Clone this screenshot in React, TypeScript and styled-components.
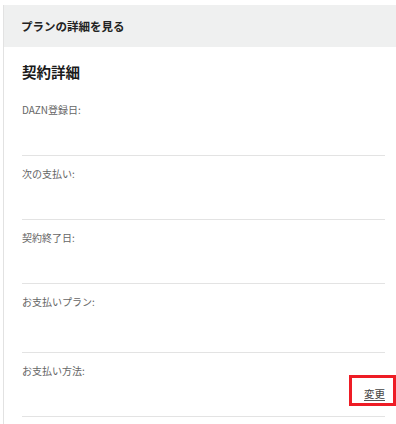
import React from "react";
import styled, {createGlobalStyle} from "styled-components";

const GlobalStyle = createGlobalStyle`
  html, body {
    margin: 0;
    padding: 0;
    background: #ffffff;
  }
  body {
    font-family: "Noto Sans CJK JP", "Noto Sans", "Liberation Sans", sans-serif;
    color: #333333;
  }
`;

const Panel = styled.div`
  margin: 5px 0 0 3px;
  border-left: 1px solid #e2e2e2;
  min-height: 419px;
`;

const Header = styled.div`
  display: flex;
  align-items: center;
  height: 42px;
  padding-left: 17px;
  background-color: #eff0f0;
  font-size: 11.5px;
  font-weight: 700;
  color: #222222;
`;

const Body = styled.div`
  padding: 0 11px 0 18px;
`;

const Title = styled.h2`
  margin: 15px 0 10px;
  font-size: 14.5px;
  line-height: 20px;
  font-weight: 700;
  color: #1a1a1a;
`;

const Row = styled.div<{ $height: number }>`
  position: relative;
  display: flex;
  flex-direction: column;
  height: ${props => props.$height}px;
  box-sizing: border-box;
  padding-top: 12px;
  border-bottom: 1.5px solid #e3e3e3;
`;

const Label = styled.div`
  font-size: 10px;
  line-height: 12px;
  color: #666666;
`;

const ChangeLink = styled.a`
  align-self: flex-end;
  margin-top: 11px;
  font-size: 10.5px;
  line-height: 11px;
  padding-bottom: 1px;
  color: #444444;
  text-decoration: none;
  border-bottom: 1px solid #555555;
  cursor: pointer;
`;

const Highlight = styled.div`
  position: absolute;
  right: -11px;
  top: 22px;
  width: 47px;
  height: 31px;
  box-sizing: border-box;
  border: 3px solid #ee1c25;
  pointer-events: none;
`;

const rows = [
    {label: "DAZN登録日:", height: 64},
    {label: "次の支払い:", height: 64},
    {label: "契約終了日:", height: 64},
    {label: "お支払いプラン:", height: 69},
];

function App() {
    return (
        <>
            <GlobalStyle/>
            <Panel>
                <Header>プランの詳細を見る</Header>
                <Body>
                    <Title>契約詳細</Title>
                    {rows.map(row => (
                        <Row key={row.label} $height={row.height}>
                            <Label>{row.label}</Label>
                        </Row>
                    ))}
                    <Row $height={64}>
                        <Label>お支払い方法:</Label>
                        <ChangeLink>変更</ChangeLink>
                        <Highlight/>
                    </Row>
                </Body>
            </Panel>
        </>
    );
}

export default App;
